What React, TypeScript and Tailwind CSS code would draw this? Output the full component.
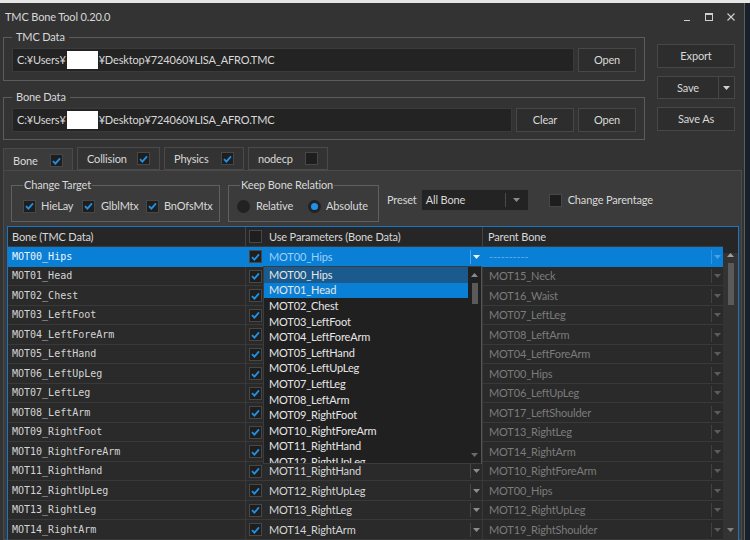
import React from 'react';

const sans = "font-['Lato','Liberation_Sans',sans-serif]";
const mono = "font-['DejaVu_Sans_Mono','Liberation_Mono',monospace]";

const rows: [string, string][] = [
    ['MOT00_Hips', '----------'],
    ['MOT01_Head', 'MOT15_Neck'],
    ['MOT02_Chest', 'MOT16_Waist'],
    ['MOT03_LeftFoot', 'MOT07_LeftLeg'],
    ['MOT04_LeftForeArm', 'MOT08_LeftArm'],
    ['MOT05_LeftHand', 'MOT04_LeftForeArm'],
    ['MOT06_LeftUpLeg', 'MOT00_Hips'],
    ['MOT07_LeftLeg', 'MOT06_LeftUpLeg'],
    ['MOT08_LeftArm', 'MOT17_LeftShoulder'],
    ['MOT09_RightFoot', 'MOT13_RightLeg'],
    ['MOT10_RightForeArm', 'MOT14_RightArm'],
    ['MOT11_RightHand', 'MOT10_RightForeArm'],
    ['MOT12_RightUpLeg', 'MOT00_Hips'],
    ['MOT13_RightLeg', 'MOT12_RightUpLeg'],
    ['MOT14_RightArm', 'MOT19_RightShoulder'],
];

const listItems = rows.slice(0, 13).map((r) => r[0]);

const Down = ({ color = '#9a9a9a' }: { color?: string }) => (
    <svg width="7" height="4" viewBox="0 0 7 4">
        <path d="M0 0h7L3.5 4z" fill={color} />
    </svg>
);

const Up = ({ color = '#9a9a9a' }: { color?: string }) => (
    <svg width="7" height="4" viewBox="0 0 7 4">
        <path d="M0 4h7L3.5 0z" fill={color} />
    </svg>
);

const Box = ({ on = true }: { on?: boolean }) => (
    <span className="flex h-[13px] w-[13px] shrink-0 items-center justify-center border border-[#474747] bg-[#1e1e1e]">
        {on && (
            <svg width="9" height="8" viewBox="0 0 9 8">
                <path d="M1 4.2 3.4 6.6 8 1.3" fill="none" stroke="#2092e6" strokeWidth="1.8" />
            </svg>
        )}
    </span>
);

const Radio = ({ on = false }: { on?: boolean }) => (
    <span className="flex h-[13px] w-[13px] shrink-0 items-center justify-center rounded-full bg-[#222222]">
        {on && <span className="h-[7px] w-[7px] rounded-full bg-[#1f91e8]" />}
    </span>
);

const Btn = ({ children, w }: { children: React.ReactNode; w: string }) => (
    <div className={`flex h-[24px] ${w} shrink-0 items-center justify-center border border-[#474747] bg-[#2d2d2d]`}>
        {children}
    </div>
);

const PathInput = () => (
    <div className="flex h-[24px] flex-1 items-center border border-[#3a3a3a] bg-[#232323] pl-[4px]">
        <span>C:¥Users¥</span>
        <span className="mx-[1px] h-[18px] w-[31px] bg-white" />
        <span>¥Desktop¥724060¥LISA_AFRO.TMC</span>
    </div>
);

const Tab = ({ label, on, active, w }: { label: string; on: boolean; active?: boolean; w: string }) => (
    <div
        className={`flex h-[23px] ${w} items-center justify-between border border-[#4a4a4a] pl-[9px] pr-[9px] ${
            active ? '-mb-px border-b-[#3b3b3b] bg-[#3b3b3b] pt-[2px]' : 'bg-[#333333]'
        }`}
    >
        <span>{label}</span>
        <Box on={on} />
    </div>
);

export default function App() {
    return (
        <div className={`flex h-[540px] w-[750px] flex-col overflow-hidden bg-[#18202c] ${sans} text-[11px] leading-[14px] tracking-[-0.15px] text-[#d8d8d8]`}>
            <div className="h-[3px] shrink-0 bg-[#e6e6e6]" />
            <div className="flex min-h-0 flex-1">
                {/* WINDOW START */}
                <div className="flex w-[745px] shrink-0 flex-col overflow-hidden border-r border-[#5e5e5e] bg-[#333333]">
                    <div className="flex h-[27px] shrink-0 items-center justify-between pl-[5px] pr-[9px]">
                        <span>TMC Bone Tool 0.20.0</span>
                        <div className="flex items-center gap-[14px]">
                            <svg width="8" height="8" viewBox="0 0 8 8">
                                <path d="M1 7.5h6" stroke="#d0d0d0" />
                            </svg>
                            <svg width="8" height="8" viewBox="0 0 8 8">
                                <rect x="0.5" y="0.5" width="7" height="7" fill="none" stroke="#d0d0d0" />
                                <path d="M0.5 1.5h7" stroke="#d0d0d0" />
                            </svg>
                            <svg width="8" height="8" viewBox="0 0 8 8">
                                <path d="M0.5 0.5l7 7M7.5 0.5l-7 7" stroke="#d0d0d0" strokeWidth="1.1" />
                            </svg>
                        </div>
                    </div>

                    {/* FILE SECTION START */}
                    <div className="flex shrink-0 gap-[12px] pl-[3px]">
                        <div className="flex w-[642px] flex-col">
                            <fieldset className="border border-[#5c5c5c] px-[8px] pb-[8px] pt-[4px]">
                                <legend className="px-[4px]">TMC Data</legend>
                                <div className="flex gap-[4px]">
                                    <PathInput />
                                    <Btn w="w-[58px]">Open</Btn>
                                </div>
                            </fieldset>
                            <fieldset className="mt-[9px] border border-[#5c5c5c] px-[8px] pb-[7px] pt-[4px]">
                                <legend className="px-[4px]">Bone Data</legend>
                                <div className="flex gap-[4px]">
                                    <PathInput />
                                    <Btn w="w-[58px]">Clear</Btn>
                                    <Btn w="w-[58px]">Open</Btn>
                                </div>
                            </fieldset>
                        </div>
                        <div className="flex w-[78px] flex-col gap-[8px] pt-[14px]">
                            <Btn w="w-full">Export</Btn>
                            <div className="flex h-[23px] border border-[#474747] bg-[#2d2d2d]">
                                <div className="flex flex-1 items-center justify-center">Save</div>
                                <div className="flex w-[16px] items-center justify-center border-l border-[#474747]">
                                    <Down color="#d0d0d0" />
                                </div>
                            </div>
                            <Btn w="w-full">Save As</Btn>
                        </div>
                    </div>
                    {/* FILE SECTION END */}

                    {/* TABS START */}
                    <div className="mt-[7px] flex shrink-0 items-end gap-[4px] pl-[3px]">
                        <Tab label="Bone" on active w="w-[70px]" />
                        <Tab label="Collision" on w="w-[83px]" />
                        <Tab label="Physics" on w="w-[80px]" />
                        <Tab label="nodecp" on={false} w="w-[80px]" />
                    </div>
                    {/* TABS END */}

                    <div className="ml-[3px] flex min-h-0 w-[739px] flex-1 flex-col border border-[#4a4a4a] bg-[#3b3b3b]">
                        {/* OPTIONS ROW START */}
                        <div className="flex shrink-0 items-center pl-[7px] pt-[7px]">
                            <fieldset className="w-[209px] border border-[#606060] pb-[8px] pl-[11px] pt-[7px]">
                                <legend className="px-[1px]">Change Target</legend>
                                <div className="flex items-center">
                                    <div className="flex w-[59px] items-center gap-[5px]">
                                        <Box />
                                        <span>HieLay</span>
                                    </div>
                                    <div className="flex w-[64px] items-center gap-[6px]">
                                        <Box />
                                        <span>GlblMtx</span>
                                    </div>
                                    <div className="flex items-center gap-[5px]">
                                        <Box />
                                        <span>BnOfsMtx</span>
                                    </div>
                                </div>
                            </fieldset>
                            <fieldset className="ml-[8px] w-[151px] border border-[#606060] pb-[8px] pl-[8px] pt-[7px]">
                                <legend className="ml-[3px] px-[1px]">Keep Bone Relation</legend>
                                <div className="flex items-center">
                                    <div className="flex w-[71px] items-center gap-[6px]">
                                        <Radio />
                                        <span>Relative</span>
                                    </div>
                                    <div className="flex items-center gap-[5px]">
                                        <Radio on />
                                        <span>Absolute</span>
                                    </div>
                                </div>
                            </fieldset>
                            <span className="ml-[8px]">Preset</span>
                            <div className="ml-[4px] flex h-[22px] w-[108px] items-center border border-[#3a3a3a] bg-[#232323]">
                                <span className="flex-1 pl-[4px]">All Bone</span>
                                <span className="h-[14px] w-px bg-[#4a4a4a]" />
                                <span className="flex w-[22px] justify-center">
                                    <Down color="#8a8a8a" />
                                </span>
                            </div>
                            <span className="ml-[20px]">
                                <Box on={false} />
                            </span>
                            <span className="ml-[6px]">Change Parentage</span>
                        </div>
                        {/* OPTIONS ROW END */}

                        {/* TABLE START */}
                        <div className="mb-[-20px] ml-[3px] mr-[2px] mt-[4px] flex min-h-0 flex-1 border border-[#1776c6] bg-[#2a2a2a]">
                            <div className="flex min-w-0 flex-1 flex-col">
                                <div className="flex h-[20px] shrink-0 items-center border-b border-[#3a3a3a] bg-[#262626]">
                                    <div className="flex h-full w-[238px] items-center border-r border-[#444444] pl-[4px]">Bone (TMC Data)</div>
                                    <div className="flex h-full w-[237px] items-center border-r border-[#444444] pl-[3px]">
                                        <Box on={false} />
                                        <span className="ml-[7px]">Use Parameters (Bone Data)</span>
                                    </div>
                                    <div className="flex h-full flex-1 items-center pl-[5px]">Parent Bone</div>
                                </div>

                                {rows.map(([name, parent], i) => {
                                    const sel = i === 0;
                                    return (
                                        <div
                                            key={name}
                                            className={`flex shrink-0 border-b ${i % 2 === 0 ? 'h-[20px]' : 'h-[19px]'} ${
                                                sel ? 'border-[#0a7fd6] bg-[#0a7fd6]' : 'border-[#393939] bg-[#2a2a2a]'
                                            }`}
                                        >
                                            <div
                                                className={`flex w-[238px] items-center border-r pl-[4px] ${mono} text-[10px] tracking-normal ${
                                                    sel ? 'border-[#0a7fd6] text-[#eef6fd]' : 'border-[#393939] text-[#d4d4d4]'
                                                }`}
                                            >
                                                {name}
                                            </div>
                                            <div className={`flex w-[237px] items-center border-r pl-[3px] ${sel ? 'border-[#0a7fd6]' : 'border-[#393939]'}`}>
                                                <Box />
                                                <div className="relative ml-[2px] flex h-full flex-1 items-center">
                                                    <span className={`flex-1 pl-[5px] ${sel ? 'text-[#9fd0f5]' : 'text-[#d6d6d6]'}`}>{name}</span>
                                                    <span className={`h-[14px] w-px ${sel ? 'bg-[#4ea6e6]' : 'bg-[#454545]'}`} />
                                                    <span className="flex w-[11px] justify-center">
                                                        <Down color={sel ? '#e6f2fc' : '#8c8c8c'} />
                                                    </span>

                                                    {/* DROPDOWN LIST START */}
                                                    {sel && (
                                                        <div className="absolute left-[-1px] top-full z-10 flex h-[198px] w-[219px] overflow-hidden border border-[#3c3c3c] border-r-[#555555] bg-[#202020]">
                                                            <div className="flex flex-1 flex-col">
                                                                {listItems.map((it, j) => (
                                                                    <div
                                                                        key={it}
                                                                        className={`flex h-[15.6px] shrink-0 items-center pl-[5px] text-[#e6e6e6] ${
                                                                            j === 0 ? 'bg-[#1b5a8c]' : j === 1 ? 'bg-[#0a7fd6]' : ''
                                                                        }`}
                                                                    >
                                                                        {it}
                                                                    </div>
                                                                ))}
                                                            </div>
                                                            <div className="flex w-[13px] flex-col items-center pt-[6px]">
                                                                <Up color="#8a8a8a" />
                                                                <span className="mt-[6px] h-[21px] w-[6px] bg-[#5a5a5a]" />
                                                                <span className="flex-1" />
                                                                <span className="mb-[6px]">
                                                                    <Down color="#6a6a6a" />
                                                                </span>
                                                            </div>
                                                        </div>
                                                    )}
                                                    {/* DROPDOWN LIST END */}
                                                </div>
                                            </div>
                                            <div className="flex flex-1 items-center">
                                                <span className={`flex-1 pl-[6px] ${sel ? 'text-[#5eaeea]' : 'text-[#7c7c7c]'}`}>{parent}</span>
                                                <span className={`h-[14px] w-px ${sel ? 'bg-[#3596de]' : 'bg-[#424242]'}`} />
                                                <span className="flex w-[11px] justify-center">
                                                    <Down color={sel ? '#4aa2e4' : '#5c5c5c'} />
                                                </span>
                                            </div>
                                        </div>
                                    );
                                })}
                            </div>

                            <div className="flex w-[15px] shrink-0 flex-col items-center bg-[#333333]">
                                <span className="h-[26px] w-full bg-[#262626]" />
                                <Up color="#a0a0a0" />
                                <span className="mt-[6px] h-[42px] w-[6px] bg-[#5a5a5a]" />
                                <span className="flex-1" />
                                <span className="mb-[26px]">
                                    <Down color="#808080" />
                                </span>
                            </div>
                        </div>
                        {/* TABLE END */}
                    </div>
                </div>
                {/* WINDOW END */}
            </div>
        </div>
    );
}
